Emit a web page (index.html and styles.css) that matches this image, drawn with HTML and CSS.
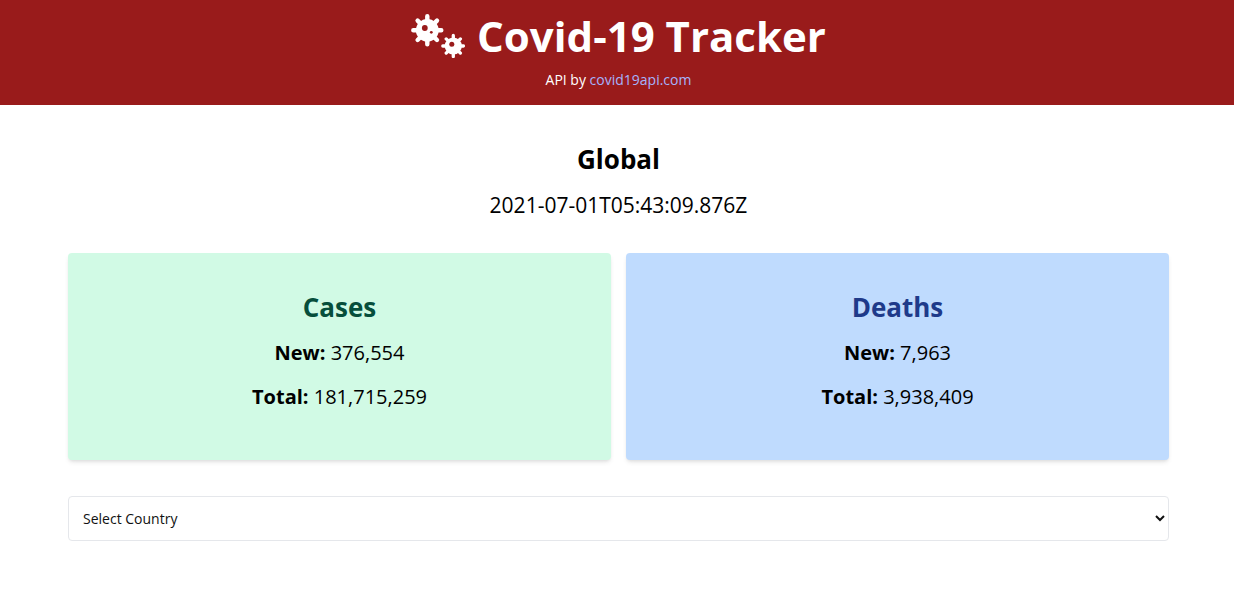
FILE: index.html
```html
<!DOCTYPE html>
<html lang="en">
<head>
<meta charset="utf-8">
<title>Covid-19 Tracker</title>
<link rel="stylesheet" href="styles.css">
</head>
<body>
<header class="header">
  <h1 class="title">
    <svg class="logo" viewBox="0 0 54 44" aria-hidden="true">
      <g stroke="#fff" stroke-linecap="round" fill="#fff">
        <path stroke-width="4.4" d="M16.3 2.3v28M2.3 16.3h28M6.6 6.6l19.4 19.4M26 6.6L6.6 26"/>
        <circle cx="16.3" cy="16.3" r="11.4" stroke="none"/>
        <path stroke-width="3.3" d="M42.3 21.5v21M31.8 32h20.6M35.2 24.9l14.2 14.2M49.4 24.9L35.2 39.1"/>
        <circle cx="42.3" cy="32" r="8.6" stroke="none"/>
      </g>
      <g fill="#991b1b">
        <circle cx="13.8" cy="14" r="2.9"/>
        <circle cx="20.3" cy="18.3" r="1.4"/>
        <circle cx="40.8" cy="30.3" r="2.5"/>
      </g>
    </svg>
    Covid-19 Tracker
  </h1>
  <p class="credit">API by <a class="link" href="https://covid19api.com">covid19api.com</a></p>
</header>
<main class="main">
  <section class="summary">
    <h2 class="heading">Global</h2>
    <p class="date">2021-07-01T05:43:09.876Z</p>
  </section>
  <section class="cards">
    <article class="card card-cases">
      <h3 class="heading">Cases</h3>
      <p class="stat"><strong>New:</strong> 376,554</p>
      <p class="stat"><strong>Total:</strong> 181,715,259</p>
    </article>
    <article class="card card-deaths">
      <h3 class="heading">Deaths</h3>
      <p class="stat"><strong>New:</strong> 7,963</p>
      <p class="stat"><strong>Total:</strong> 3,938,409</p>
    </article>
  </section>
  <select class="country" aria-label="Country">
    <option>Select Country</option>
  </select>
</main>
</body>
</html>
```
FILE: styles.css
```css
* { box-sizing: border-box; }
body {
  margin: 0;
  background: #fff;
  color: #000;
  font-family: "Open Sans", "Noto Sans", sans-serif;
}
h1, h2, h3, p { margin: 0; }
.header {
  padding: 14px 0 14px 3px;
  background: #991b1b;
  color: #fff;
  text-align: center;
}
.title {
  display: flex;
  justify-content: center;
  align-items: center;
  gap: 12px;
  margin-bottom: 11px;
  font-size: 42px;
  line-height: 44px;
}
.logo { width: 54px; height: 44px; }
.credit { font-size: 14px; line-height: 22px; }
.link { color: #a5b4fc; text-decoration: none; }
.main { padding: 36px 65px 36px 68px; }
.summary { margin-bottom: 32px; text-align: center; }
.heading {
  margin-bottom: 12px;
  font-size: 26px;
  line-height: 36px;
}
.date, .stat { font-size: 20px; line-height: 32px; }
.date { font-size: 21px; }
.cards {
  display: grid;
  grid-template-columns: 1fr 1fr;
  gap: 15px;
  margin-bottom: 36px;
}
.card {
  padding: 36px 36px 47px;
  border-radius: 4px;
  box-shadow: 0 3px 5px -1px rgba(0, 0, 0, 0.1), 0 2px 3px -1px rgba(0, 0, 0, 0.06);
  text-align: center;
}
.card .stat + .stat { margin-top: 12px; }
.card-cases { background: #d1fae5; }
.card-cases .heading { color: #064e3b; }
.card-deaths { background: #bfdbfe; }
.card-deaths .heading { color: #1e3a8a; }
.country {
  display: block;
  width: 100%;
  height: 45px;
  padding: 0 0 0 10px;
  border: 1px solid #e5e7eb;
  border-radius: 4px;
  background: #fff;
  color: #111;
  font-family: inherit;
  font-size: 14px;
}
```
